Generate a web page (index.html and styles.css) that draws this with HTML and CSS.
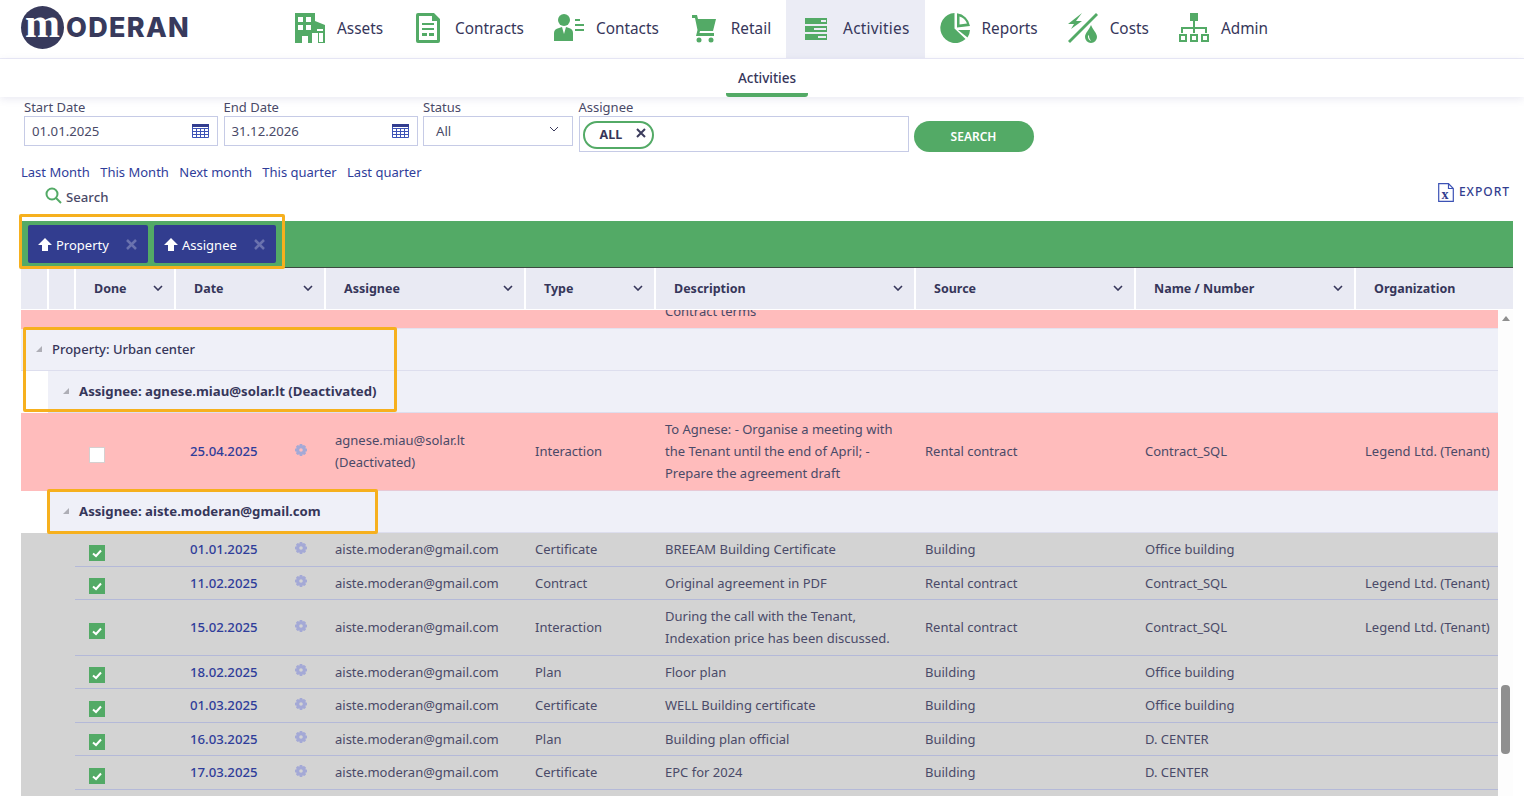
FILE: index.html
```html
<!DOCTYPE html>
<html lang="en">
<head>
<meta charset="utf-8">
<title>Moderan - Activities</title>
<link rel="stylesheet" href="styles.css">
</head>
<body>
<header class="topbar">
  <a class="logo"><span class="logo-mark">m</span><span class="logo-word">ODERAN</span></a>
  <nav class="nav">
    <a class="nav-item"><span class="nav-icon"><svg viewBox="0 0 30 30" width="30" height="30"><path class="g" fill-rule="evenodd" d="M0 0H20V8L30 12V30H23V20H17V30H13V23H7V30H0ZM3 4V9H8V4ZM11 4V9H16V4ZM3 12V17H8V12ZM11 12V17H16V12ZM22 16V18H28V16ZM24 20V29H28V20Z"/></svg></span>Assets</a>
    <a class="nav-item"><span class="nav-icon"><svg viewBox="0 0 30 30" width="30" height="30"><path class="g" fill-rule="evenodd" d="M5 0H21L27 6V28Q27 30 25 30H5Q3 30 3 28V2Q3 0 5 0ZM6 3V27H24V8H19V3ZM9 10H21V12H9ZM9 15H21V17H9ZM9 20H14V23H9ZM16 20H21V23H16Z"/></svg></span>Contracts</a>
    <a class="nav-item"><span class="nav-icon"><svg viewBox="0 0 30 30" width="30" height="30"><circle class="g" cx="10" cy="7" r="6"/><path class="g" d="M0 28V20Q0 16 5 15L8 14 10 21 12 14 15 15Q19 16 19 20V28Z"/><path class="g" d="M21 6H26V8H21ZM21 11H30V13H21ZM21 16H30V18H21Z"/></svg></span>Contacts</a>
    <a class="nav-item"><span class="nav-icon"><svg viewBox="0 0 30 30" width="30" height="30"><path class="g" d="M3 2H8L9 6H27L24 18H11L10.500 20H25V23H7L8.500 17 6 5H3Z"/><circle class="g" cx="10" cy="27" r="2.500"/><circle class="g" cx="22" cy="27" r="2.500"/></svg></span>Retail</a>
    <a class="nav-item active"><span class="nav-icon"><svg viewBox="0 0 30 30" width="30" height="30"><path class="g" fill-rule="evenodd" d="M4 5H26V11H4ZM20 7V9H25V7ZM4 13H26V19H4ZM13 15V17H25V15ZM4 21H26V27H4ZM17 23V25H25V23Z"/></svg></span>Activities</a>
    <a class="nav-item"><span class="nav-icon"><svg viewBox="0 0 30 30" width="30" height="30"><path class="g" d="M14.500 0V15.500L25.500 26A15 15 0 1 1 14.500 0Z"/><path class="g" fill-rule="evenodd" d="M17 .3A15 15 0 0 1 30 13L17 14.500ZM19.500 3.500V11.500L27 10.500A12 12 0 0 0 19.500 3.500Z"/><path class="g" d="M18 17H30A15 15 0 0 1 27.500 24.500Z"/></svg></span>Reports</a>
    <a class="nav-item"><span class="nav-icon"><svg viewBox="0 0 30 30" width="30" height="30"><path class="g" d="M28 0 30 2 2 30 0 28Z"/><path class="g" d="M14 0 8 8H14L3 16 6 11H0Z"/><path class="g" fill-rule="evenodd" d="M23 12C25 17 29 20 29 24A6 6 0 0 1 17 24C17 20 21 17 23 12ZM20 23C20 26 21 27 23 28 21 25 21 24 21 22Z"/></svg></span>Costs</a>
    <a class="nav-item"><span class="nav-icon"><svg viewBox="0 0 30 30" width="30" height="30"><path class="g" d="M11 0H19V8H11ZM14 8H16V14H28V20H26V16H16V20H14V16H4V20H2V14H14Z"/><path class="g" fill-rule="evenodd" d="M0 21H8V29H0ZM2 23V27H6V23ZM11 21H19V29H11ZM13 23V27H17V23ZM22 21H30V29H22ZM24 23V27H28V23Z"/></svg></span>Admin</a>
  </nav>
</header>
<div class="subnav"><a class="subnav-item">Activities</a></div>

<main class="main">
  <section class="filters">
    <div class="field">
      <label class="field-label">Start Date</label>
      <div class="input date"><span>01.01.2025</span><svg class="cal" viewBox="0 0 17 14" width="17" height="14"><path d="M.5.500H16.500V13.500H.5ZM.5 4.500H16.500M.5 7.500H16.500M.5 10.500H16.500M4.500 4V13M8.500 4V13M12.500 4V13" fill="none" stroke="#3c52b5"/><path d="M0 0H17V3H0Z" fill="#323d8f"/></svg></div>
    </div>
    <div class="field">
      <label class="field-label">End Date</label>
      <div class="input date"><span>31.12.2026</span><svg class="cal" viewBox="0 0 17 14" width="17" height="14"><path d="M.5.500H16.500V13.500H.5ZM.5 4.500H16.500M.5 7.500H16.500M.5 10.500H16.500M4.500 4V13M8.500 4V13M12.500 4V13" fill="none" stroke="#3c52b5"/><path d="M0 0H17V3H0Z" fill="#323d8f"/></svg></div>
    </div>
    <div class="field status">
      <label class="field-label">Status</label>
      <div class="input select"><span>All</span><svg viewBox="0 0 10 6" width="10" height="6"><path d="M1 1 5 5 9 1" fill="none" stroke="#3b3b5c" stroke-width="1"/></svg></div>
    </div>
    <div class="field assignee">
      <label class="field-label">Assignee</label>
      <div class="input tags"><span class="chip">ALL<svg viewBox="0 0 10 10" width="10" height="10"><path d="M1 1 9 9M9 1 1 9" stroke="#3b3b5c" stroke-width="2"/></svg></span></div>
    </div>
    <button class="search-btn">SEARCH</button>
  </section>

  <div class="quick-links">
    <a>Last Month</a><a>This Month</a><a>Next month</a><a>This quarter</a><a>Last quarter</a>
  </div>

  <div class="toolbar">
    <div class="search"><svg viewBox="0 0 17 17" width="17" height="17"><circle cx="7" cy="7" r="5.500" fill="none" stroke="#53aa66" stroke-width="2"/><path d="M11 11 16 16" stroke="#53aa66" stroke-width="2"/></svg><span>Search</span></div>
    <a class="export"><svg viewBox="0 0 16 19" width="16" height="19"><path d="M.7.700H10.500L15.300 5.500V18.300H.7Z M10.500.7V5.500H15.300" fill="none" stroke="#3c52b5" stroke-width="1.200"/><text x="7.500" y="16" text-anchor="middle" class="xl">x</text></svg>EXPORT</a>
  </div>

  <section class="grid">
    <div class="groupbar">
      <span class="gchip"><svg viewBox="0 0 14 13" width="14" height="13"><path d="M7 0 14 7H10V13H4V7H0Z" fill="#fff"/></svg>Property<svg class="gx" viewBox="0 0 11 11" width="11" height="11"><path d="M1 1 10 10M10 1 1 10" stroke="#6a72ae" stroke-width="2.500"/></svg></span>
      <span class="gchip"><svg viewBox="0 0 14 13" width="14" height="13"><path d="M7 0 14 7H10V13H4V7H0Z" fill="#fff"/></svg>Assignee<svg class="gx" viewBox="0 0 11 11" width="11" height="11"><path d="M1 1 10 10M10 1 1 10" stroke="#6a72ae" stroke-width="2.500"/></svg></span>
    </div>

    <div class="thead">
      <div class="th"></div>
      <div class="th"></div>
      <div class="th">Done<svg viewBox="0 0 10 6" width="10" height="6"><path d="M1 1 5 5 9 1" fill="none" stroke="#36365a" stroke-width="1.600"/></svg></div>
      <div class="th">Date<svg viewBox="0 0 10 6" width="10" height="6"><path d="M1 1 5 5 9 1" fill="none" stroke="#36365a" stroke-width="1.600"/></svg></div>
      <div class="th">Assignee<svg viewBox="0 0 10 6" width="10" height="6"><path d="M1 1 5 5 9 1" fill="none" stroke="#36365a" stroke-width="1.600"/></svg></div>
      <div class="th">Type<svg viewBox="0 0 10 6" width="10" height="6"><path d="M1 1 5 5 9 1" fill="none" stroke="#36365a" stroke-width="1.600"/></svg></div>
      <div class="th">Description<svg viewBox="0 0 10 6" width="10" height="6"><path d="M1 1 5 5 9 1" fill="none" stroke="#36365a" stroke-width="1.600"/></svg></div>
      <div class="th">Source<svg viewBox="0 0 10 6" width="10" height="6"><path d="M1 1 5 5 9 1" fill="none" stroke="#36365a" stroke-width="1.600"/></svg></div>
      <div class="th">Name / Number<svg viewBox="0 0 10 6" width="10" height="6"><path d="M1 1 5 5 9 1" fill="none" stroke="#36365a" stroke-width="1.600"/></svg></div>
      <div class="th">Organization</div>
    </div>

    <div class="tbody-wrap">
      <div class="tbody">
        <div class="row pink clipped"><div class="cells"><div></div><div></div><div></div><div></div><div></div><div class="cell">Contract terms</div></div></div>

        <div class="group level1"><i class="tri"></i>Property: Urban center</div>
        <div class="group level2"><i class="tri"></i><b>Assignee: agnese.miau@solar.lt (Deactivated)</b></div>

        <div class="row pink tall"><div class="cells">
          <div class="cell done"><span class="box"></span></div>
          <div class="cell dt">25.04.2025</div>
          <div class="cell gear"><svg viewBox="0 0 12 12" width="12" height="12"><use href="#gear"/></svg></div>
          <div class="cell">agnese.miau@solar.lt (Deactivated)</div>
          <div class="cell">Interaction</div>
          <div class="cell">To Agnese: - Organise a meeting with the Tenant until the end of April; - Prepare the agreement draft</div>
          <div class="cell">Rental contract</div>
          <div class="cell">Contract_SQL</div>
          <div class="cell">Legend Ltd. (Tenant)</div>
        </div></div>

        <div class="group level2 second"><i class="tri"></i><b>Assignee: aiste.moderan@gmail.com</b></div>

        <div class="row grey"><div class="cells">
          <div class="cell done"><span class="box on"><svg viewBox="0 0 16 16" width="16" height="16"><path d="M4 8.500 7 11 12 5.500" fill="none" stroke="#fff" stroke-width="2"/></svg></span></div>
          <div class="cell dt">01.01.2025</div>
          <div class="cell gear"><svg viewBox="0 0 12 12" width="12" height="12"><use href="#gear"/></svg></div>
          <div class="cell">aiste.moderan@gmail.com</div><div class="cell">Certificate</div><div class="cell">BREEAM Building Certificate</div><div class="cell">Building</div><div class="cell">Office building</div><div class="cell"></div>
        </div></div>
        <div class="row grey"><div class="cells">
          <div class="cell done"><span class="box on"><svg viewBox="0 0 16 16" width="16" height="16"><path d="M4 8.500 7 11 12 5.500" fill="none" stroke="#fff" stroke-width="2"/></svg></span></div>
          <div class="cell dt">11.02.2025</div>
          <div class="cell gear"><svg viewBox="0 0 12 12" width="12" height="12"><use href="#gear"/></svg></div>
          <div class="cell">aiste.moderan@gmail.com</div><div class="cell">Contract</div><div class="cell">Original agreement in PDF</div><div class="cell">Rental contract</div><div class="cell">Contract_SQL</div><div class="cell">Legend Ltd. (Tenant)</div>
        </div></div>
        <div class="row grey"><div class="cells">
          <div class="cell done"><span class="box on"><svg viewBox="0 0 16 16" width="16" height="16"><path d="M4 8.500 7 11 12 5.500" fill="none" stroke="#fff" stroke-width="2"/></svg></span></div>
          <div class="cell dt">15.02.2025</div>
          <div class="cell gear"><svg viewBox="0 0 12 12" width="12" height="12"><use href="#gear"/></svg></div>
          <div class="cell">aiste.moderan@gmail.com</div><div class="cell">Interaction</div><div class="cell">During the call with the Tenant, Indexation price has been discussed.</div><div class="cell">Rental contract</div><div class="cell">Contract_SQL</div><div class="cell">Legend Ltd. (Tenant)</div>
        </div></div>
        <div class="row grey"><div class="cells">
          <div class="cell done"><span class="box on"><svg viewBox="0 0 16 16" width="16" height="16"><path d="M4 8.500 7 11 12 5.500" fill="none" stroke="#fff" stroke-width="2"/></svg></span></div>
          <div class="cell dt">18.02.2025</div>
          <div class="cell gear"><svg viewBox="0 0 12 12" width="12" height="12"><use href="#gear"/></svg></div>
          <div class="cell">aiste.moderan@gmail.com</div><div class="cell">Plan</div><div class="cell">Floor plan</div><div class="cell">Building</div><div class="cell">Office building</div><div class="cell"></div>
        </div></div>
        <div class="row grey"><div class="cells">
          <div class="cell done"><span class="box on"><svg viewBox="0 0 16 16" width="16" height="16"><path d="M4 8.500 7 11 12 5.500" fill="none" stroke="#fff" stroke-width="2"/></svg></span></div>
          <div class="cell dt">01.03.2025</div>
          <div class="cell gear"><svg viewBox="0 0 12 12" width="12" height="12"><use href="#gear"/></svg></div>
          <div class="cell">aiste.moderan@gmail.com</div><div class="cell">Certificate</div><div class="cell">WELL Building certificate</div><div class="cell">Building</div><div class="cell">Office building</div><div class="cell"></div>
        </div></div>
        <div class="row grey"><div class="cells">
          <div class="cell done"><span class="box on"><svg viewBox="0 0 16 16" width="16" height="16"><path d="M4 8.500 7 11 12 5.500" fill="none" stroke="#fff" stroke-width="2"/></svg></span></div>
          <div class="cell dt">16.03.2025</div>
          <div class="cell gear"><svg viewBox="0 0 12 12" width="12" height="12"><use href="#gear"/></svg></div>
          <div class="cell">aiste.moderan@gmail.com</div><div class="cell">Plan</div><div class="cell">Building plan official</div><div class="cell">Building</div><div class="cell">D. CENTER</div><div class="cell"></div>
        </div></div>
        <div class="row grey"><div class="cells">
          <div class="cell done"><span class="box on"><svg viewBox="0 0 16 16" width="16" height="16"><path d="M4 8.500 7 11 12 5.500" fill="none" stroke="#fff" stroke-width="2"/></svg></span></div>
          <div class="cell dt">17.03.2025</div>
          <div class="cell gear"><svg viewBox="0 0 12 12" width="12" height="12"><use href="#gear"/></svg></div>
          <div class="cell">aiste.moderan@gmail.com</div><div class="cell">Certificate</div><div class="cell">EPC for 2024</div><div class="cell">Building</div><div class="cell">D. CENTER</div><div class="cell"></div>
        </div></div>
        <div class="row grey filler"></div>
      </div>
      <div class="scrollbar"><i class="arrow"></i><i class="thumb"></i></div>
    </div>
  </section>

  <div class="mark mark-a"></div>
  <div class="mark mark-b"></div>
  <div class="mark mark-c"></div>
</main>

<svg class="defs" width="0" height="0"><defs><g id="gear"><path fill="#a4a9d6" fill-rule="evenodd" d="M4.800 0H7.200L7.600 1.600 9 .9 11 2.600 10.300 4.200 12 4.800V7.200L10.300 7.700 11 9.400 9.300 11 7.700 10.300 7.200 12H4.800L4.300 10.300 2.700 11 1 9.400 1.700 7.700 0 7.200V4.800L1.700 4.200 1 2.600 2.700 1 4.300 1.700ZM6 4.200A1.800 1.800 0 1 0 6 7.800 1.800 1.800 0 0 0 6 4.200Z"/></g></defs></svg>
</body>
</html>
```
FILE: styles.css
```css
* { box-sizing: border-box; }
html, body { margin: 0; height: 796px; overflow: hidden; }
body {
  font-family: "Noto Sans", "Open Sans", sans-serif;
  font-size: 13px;
  line-height: 22px;
  color: #4a4a68;
  background: #fff;
  display: flex;
  flex-direction: column;
  position: relative;
}
.g { fill: #53aa66; }
.defs { position: absolute; }

/* top bar */
.topbar {
  height: 59px;
  flex: none;
  display: flex;
  border-bottom: 1px solid #ebebf7;
  padding-left: 21px;
}
.logo { width: 259px; display: flex; align-items: center; height: 43px; margin-top: 6px; }
.logo-mark {
  width: 43px; height: 43px; border-radius: 50%;
  background: #383a5c; color: #fff;
  font: 700 42px/35px "Liberation Serif", serif;
  text-align: center;
  flex: none;
}
.logo-word {
  font: 800 27px/43px Inter, sans-serif;
  letter-spacing: 1.300px;
  color: #383a5c;
  margin-left: 2px;
}
.nav { display: flex; height: 58px; }
.nav-item {
  display: flex; align-items: center; gap: 12px;
  padding: 0 15px 3px;
  font-size: 15.350px;
  color: #36365a;
  line-height: 24px;
}
.nav-item.active { background: #ebecf5; letter-spacing: .25px; }
.nav-icon { width: 30px; height: 30px; flex: none; display: block; margin-top: 1px; }
.nav-icon svg { display: block; }

.subnav {
  height: 38px; flex: none;
  display: flex; justify-content: center;
  box-shadow: 0 2px 8px rgba(70, 70, 150, .12);
  position: relative;
}
.subnav-item {
  width: 82px;
  height: 38px;
  margin-left: 10px;
  text-align: center;
  font-size: 13.500px;
  font-weight: 500;
  line-height: 38px;
  color: #36365a;
  border-bottom: 4px solid #53aa66;
  border-radius: 0 0 3px 3px;
}

/* main */
.main { flex: 1; min-height: 0; display: flex; flex-direction: column; padding: 1px 11px 0 21px; }
.filters { display: flex; margin-left: 3px; height: 54px; flex: none; }
.field { width: 194px; margin-right: 5.500px; }
.status { width: 150px; }
.assignee { width: 330px; margin-right: 5px; }
.field-label { display: block; height: 18px; font-size: 13px; line-height: 18px; color: #4a4a68; }
.input {
  height: 30px;
  border: 1px solid #c6cbe6;
  display: flex; align-items: center; justify-content: space-between;
  font-size: 13.200px;
}
.date { padding: 0 8px 0 7px; }
.select { padding: 0 13px 0 12px; }
.select svg { margin-top: -4px; }
.tags { height: 36px; padding-left: 3px; justify-content: flex-start; }
.chip {
  width: 71px; height: 28px;
  border: 2px solid #53aa66; border-radius: 14px;
  display: flex; align-items: center; justify-content: space-between;
  padding: 0 6px 0 15px;
  font-size: 12.500px; font-weight: 700; color: #36365a;
  margin-top: 1px;
}
.chip svg { margin-top: -3px; }
.search-btn {
  width: 120px; height: 31px; margin-top: 23px;
  border: 0; border-radius: 16px;
  background: #53aa66; color: #fff;
  font: 600 12px/31px "Noto Sans", sans-serif;
  padding: 0;
}
.quick-links { display: flex; gap: 10.400px; margin-top: 10.500px; height: 19.500px; line-height: 19px; font-size: 13px; color: #2f3d9a; flex: none; }
.toolbar { display: flex; justify-content: space-between; align-items: flex-start; flex: none; height: 36px; padding-left: 24px; padding-right: 3px; }
.search { display: flex; align-items: center; gap: 4px; font-size: 13.200px; font-weight: 500; color: #4a4a68; margin-top: 4px; }
.search svg { margin-top: -4px; }
.export { display: flex; align-items: center; gap: 5px; font-size: 12px; font-weight: 500; letter-spacing: 1px; color: #323d8f; margin-top: -1px; }
.xl { font: 700 14px "Liberation Serif", serif; fill: #323d8f; }

/* grid */
.grid { flex: 1; min-height: 0; display: flex; flex-direction: column; margin-top: 3px; }
.groupbar {
  height: 47px; flex: none;
  background: #53aa66;
  border-bottom: 1px solid #3c4a40;
  padding: 4px 7px;
  display: flex; gap: 6px;
}
.gchip {
  height: 38px;
  background: #323d8f;
  border-radius: 2px;
  color: #fff;
  font-size: 13px;
  display: flex; align-items: center; gap: 4px;
  padding: 1px 11px 0 10px;
}
.gchip:first-child { width: 120px; }
.gchip:nth-child(2) { width: 122px; }
.gchip svg:first-child { margin-top: -1px; }
.gx { margin-left: auto; margin-top: -1px; }
.thead {
  display: grid;
  grid-template-columns: 28px 27px 100px 150px 200px 130px 260px 220px 220px 157px;
  height: 42px; flex: none;
  border-bottom: 1px solid #fff;
}
.th {
  background: #e9eaf3;
  border-right: 2px solid #fff;
  display: flex; align-items: center; justify-content: space-between;
  padding: 0 11px 0 18px;
  font-size: 12.500px; font-weight: 700; color: #36365a;
}
.th svg { margin-top: -2px; }
.th:empty { padding: 0; }
.th:last-child { border-right: 0; }
.tbody-wrap { flex: 1; min-height: 0; display: flex; }
.tbody { flex: 1; min-width: 0; overflow: hidden; }
.scrollbar { width: 15px; flex: none; background: #fdfdfd; display: flex; flex-direction: column; align-items: center; }
.arrow { display: block; margin-top: 6px; width: 0; height: 0; border: 4.500px solid transparent; border-top: 0; border-bottom: 5px solid #8f8f8f; }
.thumb { display: block; width: 9px; height: 69px; margin-top: 364px; border-radius: 4px; background: #8f8f8f; }

.row { padding-left: 54px; }
.cells {
  display: grid;
  grid-template-columns: 105px 105px 40px 200px 130px 260px 220px 220px 143px;
  border-bottom: 1px solid #b4b9d8;
}
.cell { padding: 5.250px 10px; align-self: center; font-size: 13px; }
.cell:last-child { padding-right: 0; }
.pink { background: #ffbcbc; }
.pink .cells { border-bottom-color: #e7c9d6; }
.grey { background: #d3d3d3; }
.tall .cell { padding-top: 5px; padding-bottom: 6px; }
.clipped { margin-top: -14.500px; }
.clipped .cells { border-bottom-color: #e3e2f0; min-height: 33.500px; }
.clipped .cell { padding-top: 4.250px; padding-bottom: 6.250px; }
.filler { height: 40px; }
.cell.done { padding: 0 0 0 14px; }
.box {
  display: block; width: 16px; height: 16px; margin-top: 7px;
  background: #fff; border: 1px solid #d5d0d0;
}
.box.on { background: #53aa66; border: 0; }
.box svg { display: block; }
.dt { color: #2f3d9a; font-weight: 500; font-size: 13.200px; }
.cell.gear { padding: 0 10px 3px; line-height: 0; }
.group {
  height: 42px;
  background: #eff0f8;
  display: flex; align-items: center;
  padding-bottom: 2px;
  font-size: 13px;
  font-weight: 500;
  color: #36365a;
  border-bottom: 1px solid #dddeee;
}
.group b { font-weight: 700; font-size: 13.200px; }
.level1 { padding-left: 15px; }
.level2 { margin-left: 27px; padding-left: 15px; }
.tri {
  width: 0; height: 0; margin-right: 10px;
  border-left: 6px solid transparent; border-bottom: 6px solid #aeaeb6;
}

/* annotation frames */
.mark { position: absolute; border: 3px solid #f6b01e; border-radius: 2px; pointer-events: none; }
.mark-a { left: 19px; top: 214px; width: 266px; height: 55px; }
.mark-b { left: 23px; top: 327px; width: 374px; height: 85px; }
.mark-c { left: 47px; top: 489px; width: 331px; height: 45px; }
```
